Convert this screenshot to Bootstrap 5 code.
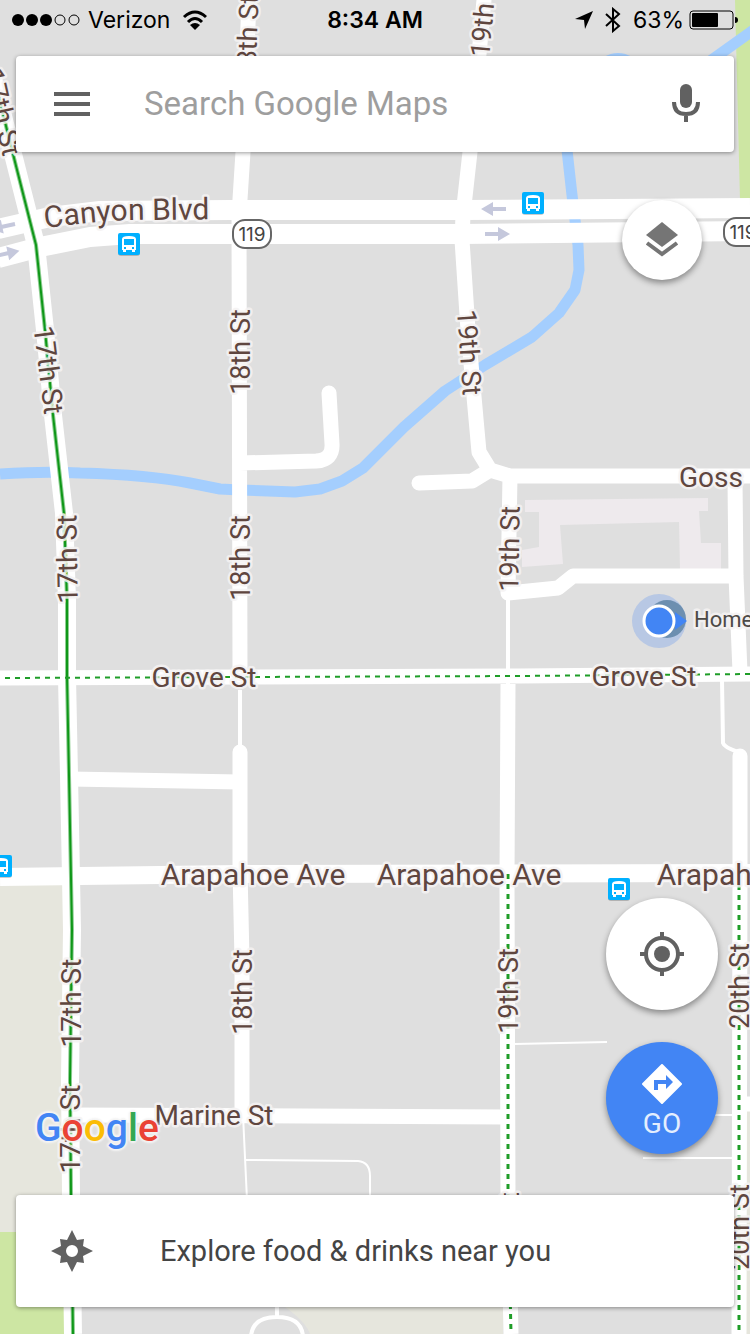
<!DOCTYPE html>
<html lang="en">
<head>
<meta charset="utf-8">
<meta name="viewport" content="width=device-width, initial-scale=1">
<title>Google Maps</title>
<link href="https://cdn.jsdelivr.net/npm/bootstrap@5.3.0/dist/css/bootstrap.min.css" rel="stylesheet">
<style>
  body { font-family: Roboto, "Liberation Sans", sans-serif; background: #dfdfdf; }
  .map-canvas { inset: 0; z-index: 0; }
  .map-canvas svg { display: block; width: 100%; height: 100%; }
  .street { fill: none; stroke: #fff; stroke-width: 15; stroke-linejoin: round; }
  .avenue { stroke-width: 18; }
  .boulevard { stroke-width: 20; }
  .lane { fill: none; stroke: #fff; stroke-width: 4; stroke-linejoin: round; }
  .alley { stroke-width: 2; }
  .bike { fill: none; stroke: #0f9718; stroke-width: 2; stroke-linejoin: round; }
  .bike-halo { fill: none; stroke: #8fce93; stroke-width: 4; }
  .bike-dots { fill: none; stroke: #1f9d28; stroke-width: 2; stroke-dasharray: 5 5; }
  .bike-dots-wide { stroke-width: 3; }
  .creek { fill: none; stroke: #a4cefe; stroke-width: 11; stroke-linejoin: round; }
  .label { fill: #5f463f; stroke: #f5f3f3; stroke-opacity: .85; stroke-width: 5; stroke-linejoin: round; paint-order: stroke; text-anchor: middle; }
  .label-st { font-size: 27px; }
  .label-ave, .label-17 { font-size: 28px; }
  .label-blvd { font-size: 30px; text-anchor: start; }
  .label-place { font-size: 22px; text-anchor: start; fill: #4d4a47; }
  .shield { fill: #fff; stroke: #666; stroke-width: 2; }
  .shield-no { font: 19px Inter, sans-serif; fill: #444; text-anchor: middle; }
  .overlay { z-index: 1; }
  .status { height: 40px; padding: 0 12px; font: 23px/40px Inter, sans-serif; color: #000; }
  .status-side { flex: 1 1 0; }
  .clock { font-weight: 600; }
  .panel { border-radius: 4px; box-shadow: 0 1px 4px rgba(0,0,0,.4); }
  .search-panel { height: 96px; padding: 0 24px 0 32px; }
  .search-panel input, .search-panel input:focus { font-size: 33px; line-height: 40px; color: #444; background: none; box-shadow: none; padding: 0; margin-left: 48px; }
  .search-panel input::placeholder { color: #9e9e9e; opacity: 1; }
  .icon-btn { width: 48px; height: 48px; }
  .fab { width: 112px; height: 112px; background: #fff; box-shadow: 0 3px 6px rgba(0,0,0,.4); }
  .fab-layers { width: 80px; height: 80px; margin: 48px 48px 0 0; }
  .fab-go, .fab-go:hover { background: #4285f4; color: #e4eefe; font-size: 28px; line-height: 32px; }
  .tools { padding: 0 32px 41px 35px; }
  .fab-stack { gap: 32px; }
  .brand { font-size: 39px; font-weight: 500; line-height: 52px; text-shadow: 0 0 3px #f4f4f4, 2px 0 2px #f4f4f4, -2px 0 2px #f4f4f4, 0 2px 2px #f4f4f4, 0 -2px 2px #f4f4f4; }
  .g-blue { color: #4285f4; } .g-red { color: #ea4335; } .g-yellow { color: #fbbc05; } .g-green { color: #34a853; }
  .explore { height: 112px; margin-bottom: 27px; padding: 0 32px; font-size: 29px; line-height: 40px; color: #444; gap: 64px; }
  .explore:hover { color: #444; }
</style>
</head>
<body>
<main class="position-relative min-vh-100 d-flex flex-column overflow-hidden">
  <div class="map-canvas position-absolute">
    <svg viewBox="0 0 750 1334" preserveAspectRatio="xMidYMid slice" role="img" aria-label="Street map">
      <defs>
        <g id="bus">
          <rect y="1" width="22" height="22" rx="3" fill="#000" opacity=".2"/>
          <rect width="22" height="22" rx="2" fill="#00b0ff"/>
          <path fill="#fff" fill-rule="evenodd" d="M4 6q0-3 7-3t7 3v11h-1v2h-3v-2H8v2H5v-2H4zM6 6v6h10V6zM6 14v2h2v-2zM14 14v2h2v-2z"/>
        </g>
        <path id="one-way" fill="#c5c8dc" d="M0 -2H13V-7L25 0L13 7V2H0z"/>
        <path id="canyon" d="M45 228Q115 219 150 220L230 219"/>
      </defs>
      <rect width="750" height="1334" fill="#dfdfdf"/>
      <path fill="#e6e6dd" d="M0 880H64V1232H0zM285 1307H503V1334H310Q306 1322 285 1307zM746 1110h4v224h-4z"/>
      <path fill="#cde6a3" d="M0 1232H66V1334H0zM735 0H750V200H740z"/>
      <path fill="#eeeaed" d="M525 500L708 498V511H699L701 543H721V570H680L679 522L560 525L563 564L522 567V550L539 547V512H525z"/>
      <path class="creek" d="M0 474Q45 471 80 473Q150 475 190 483L220 489L240 490L295 492L320 489L342 481L363 468L404 427L445 391L485 365L532 337L559 313L575 290L579 270L578 245L572 195L567 150L606 62Q618 55 630 62L706 64L755 29"/>

      <path class="lane" d="M240 690V750M508 593V684M722 680L723 743Q724 747 738 752"/>
      <path class="lane alley" d="M515 1044L607 1042M243 1115L247 1200M246 1160L358 1161Q370 1162 370 1176V1200M715 1115H740M643 1158H740"/>
      <path class="lane" d="M277 1300V1317M251 1336Q253 1317 277 1317T303 1336"/>
      <path class="street" d="M249 0L243 152L239 215L240 672M240 463L316 461Q333 460 332 444L329 393" stroke-linecap="round"/>
      <path class="street" stroke-linecap="round" d="M240 752V870L242 960V1115M419 483L472 481L490 470M484 0L470 152L463 215L462 240L468 330L479 452L490 470L510 476H755M510 476L508 593L558 588L573 576H736M735 480L736 576L740 672M740 756V870L739 1334"/>
      <path class="street" d="M70 779L240 782M508 684L507 880L508 1195L511 1334M70 1115L508 1117M745 1104H755M0 678L240 677L520 676L750 674"/>
      <path class="street avenue" d="M-12 60L13 154L36 245L45 330L53 415L64 513L67 600V677L69 775L72 930L70 1080L71 1195L73 1334M0 877L240 874L750 873"/>
      <path class="street boulevard" d="M-2 229L50 217L100 211L230 210H460L750 208M-2 258L40 247L90 237L130 234H460L750 231"/>

      <path class="bike-halo" d="M-8 70L13 154L36 245L45 330L53 415L64 513L67 600V677L69 775L72 930L70 1080L71 1195L73 1334"/>
      <path class="bike" d="M-8 70L13 154L36 245L45 330L53 415L64 513L67 600V677L69 775L72 930L70 1080L71 1195L73 1334"/>
      <path class="bike-dots" d="M5 678L240 677L520 676L750 674"/>
      <path class="bike-dots bike-dots-wide" d="M508 874V1195L511 1334M739 885V1334"/>

      <use href="#one-way" transform="translate(506 209) rotate(180)"/>
      <use href="#one-way" x="485" y="234"/>
      <use href="#one-way" transform="translate(15 224) rotate(168)"/>
      <use href="#one-way" transform="translate(-5 256) rotate(-12)"/>
      <use href="#bus" x="118" y="233"/><use href="#bus" x="522" y="192"/>
      <use href="#bus" x="608" y="878"/><use href="#bus" x="-10" y="855"/>

      <g class="label label-st">
        <text transform="translate(257 38) rotate(-88)">18th St</text>
        <text transform="translate(493 15) rotate(-85)">19th St</text>
        <text transform="translate(250 352) rotate(-90)">18th St</text>
        <text transform="translate(460 353) rotate(86)">19th St</text>
        <text transform="translate(250 558) rotate(-90)">18th St</text>
        <text transform="translate(519 549) rotate(-89)">19th St</text>
        <text transform="translate(252 992) rotate(-90)">18th St</text>
        <text transform="translate(518 991) rotate(-90)">19th St</text>
        <text transform="translate(749 986) rotate(-90)">20th St</text>
        <text transform="translate(749 1227) rotate(-90)">20th St</text>
        <text transform="translate(519 1235) rotate(-90)">19th St</text>
      </g>
      <g class="label label-17">
        <text transform="translate(-7 114) rotate(77)">17th St</text>
        <text transform="translate(39 371) rotate(83)">17th St</text>
        <text transform="translate(77 559) rotate(-91)">17th St</text>
        <text transform="translate(81 1003) rotate(-90)">17th St</text>
        <text transform="translate(80 1129) rotate(-90)">17th St</text>
      </g>
      <g class="label label-ave">
        <text x="204" y="687">Grove St</text><text x="644" y="686">Grove St</text>
        <text x="711" y="487">Goss</text><text x="214" y="1125">Marine St</text>
      </g>
      <g class="label" font-size="30">
        <text x="253" y="885">Arapahoe Ave</text><text x="469" y="885">Arapahoe Ave</text><text x="749" y="885">Arapahoe Ave</text>
      </g>
      <text class="label label-blvd"><textPath href="#canyon">Canyon Blvd</textPath></text>
      <rect class="shield" x="233" y="220" width="38" height="28" rx="12"/><text class="shield-no" x="252" y="241">119</text>
      <rect class="shield" x="724" y="218" width="38" height="28" rx="12"/><text class="shield-no" x="743" y="239">119</text>

      <circle cx="659" cy="621" r="27" fill="#4285f4" opacity=".25"/>
      <circle cx="667" cy="619" r="19" fill="#6d8fb0"/>
      <path fill="#4285f4" d="M675 612L687 621L675 630z"/>
      <circle cx="659" cy="621" r="15" fill="#4285f4" stroke="#fff" stroke-width="3"/>
      <text class="label label-place" x="694" y="627">Home</text>
    </svg>
  </div>

  <header class="overlay">
    <div class="status d-flex align-items-center">
      <div class="status-side d-flex align-items-center">
        <svg width="68" height="14" viewBox="0 0 68 14" class="me-2" aria-hidden="true"><g><circle cx="6" cy="7" r="6"/><circle cx="20" cy="7" r="6"/><circle cx="34" cy="7" r="6"/></g><g fill="none" stroke="#000"><circle cx="48" cy="7" r="5"/><circle cx="62" cy="7" r="5"/></g></svg>
        <span>Verizon</span>
        <svg class="ms-2" width="34" height="20" viewBox="0 0 34 20" aria-hidden="true"><g fill="none" stroke="#000" stroke-width="3"><path d="M6 7Q17-3 28 7"/><path d="M10 12Q17 5 24 12"/></g><path d="M12 15Q17 11 22 15L17 20z"/></svg>
      </div>
      <span class="clock">8:34 AM</span>
      <div class="status-side d-flex align-items-center justify-content-end">
        <svg width="18" height="18" viewBox="0 0 18 18" aria-hidden="true"><path d="M18 0L10 18L9 9L0 8z"/></svg>
        <svg class="mx-2" width="24" height="26" viewBox="0 0 24 26" aria-hidden="true"><path d="M5 7L18 19L12 24V2L18 7L5 19" fill="none" stroke="#000" stroke-width="2"/></svg>
        <span>63%</span>
        <svg class="ms-1" width="50" height="20" viewBox="0 0 50 20" aria-hidden="true"><rect x="2" y="1" width="43" height="18" rx="3" fill="none" stroke="#000"/><rect x="4" y="3" width="26" height="14" rx="1"/><path d="M47 7q3 0 3 3t-3 3z"/></svg>
      </div>
    </div>
    <form class="panel search-panel bg-white d-flex align-items-center mx-3 mt-3" role="search">
      <button class="btn icon-btn p-0 border-0 flex-shrink-0" type="button" aria-label="Menu">
        <svg width="36" height="24" viewBox="0 0 36 24"><path fill="#616161" d="M0 0h36v4H0zM0 10h36v4H0zM0 20h36v4H0z"/></svg>
      </button>
      <input class="form-control border-0" type="text" placeholder="Search Google Maps" aria-label="Search Google Maps">
      <button class="btn icon-btn p-0 border-0 flex-shrink-0" type="button" aria-label="Voice search">
        <svg width="28" height="40" viewBox="0 0 28 40"><rect x="8" width="12" height="24" rx="6" fill="#616161"/><path d="M2 18Q2 30 14 30T26 18M14 30V38" fill="none" stroke="#616161" stroke-width="4"/></svg>
      </button>
    </form>
  </header>

  <button class="btn fab fab-layers overlay rounded-circle border-0 p-0 align-self-end" type="button" aria-label="Layers">
    <svg width="34" height="36" viewBox="0 0 34 36"><path fill="#757575" d="M17 0L33 13L17 25L1 13z"/><path d="M2 21L17 32L32 21" fill="none" stroke="#757575" stroke-width="4"/></svg>
  </button>

  <div class="tools overlay mt-auto d-flex justify-content-between align-items-end">
    <a class="brand text-decoration-none" href="#" aria-label="Google"><span class="g-blue">G</span><span class="g-red">o</span><span class="g-yellow">o</span><span class="g-blue">g</span><span class="g-green">l</span><span class="g-red">e</span></a>
    <div class="fab-stack d-flex flex-column">
      <button class="btn fab rounded-circle border-0 p-0" type="button" aria-label="My location">
        <svg width="44" height="44" viewBox="0 0 44 44"><circle cx="22" cy="22" r="8" fill="#616161"/><g fill="none" stroke="#616161" stroke-width="4"><circle cx="22" cy="22" r="16"/><path d="M22 0V6M22 38V44M0 22H6M38 22H44"/></g></svg>
      </button>
      <button class="btn fab fab-go rounded-circle border-0 px-0 pt-2 pb-0 d-flex flex-column align-items-center justify-content-center gap-1" type="button">
        <svg width="40" height="40" viewBox="0 0 40 40" aria-hidden="true"><path fill="#fff" stroke="#fff" stroke-width="2" stroke-linejoin="round" d="M20 1L39 20L20 39L1 20z"/><path fill="#4285f4" d="M12 26V16H24V11L31 18L24 25V20H16V26z"/></svg>
        <span>GO</span>
      </button>
    </div>
  </div>

  <a class="panel explore overlay bg-white d-flex align-items-center mx-3 text-decoration-none" href="#">
    <svg class="flex-shrink-0" width="48" height="42" viewBox="-24 -21 48 42" aria-hidden="true"><path fill="#616161" fill-rule="evenodd" d="M0-21L5-11L12-12L11-5L21 0L11 5L12 12L5 11L0 21L-5 11L-12 12L-11 5L-21 0L-11-5L-12-12L-5-11zM6 0A6 6 0 1 0-6 0A6 6 0 1 0 6 0z"/></svg>
    <span>Explore food &amp; drinks near you</span>
  </a>
</main>
<script src="https://cdn.jsdelivr.net/npm/bootstrap@5.3.0/dist/js/bootstrap.bundle.min.js"></script>
</body>
</html>
